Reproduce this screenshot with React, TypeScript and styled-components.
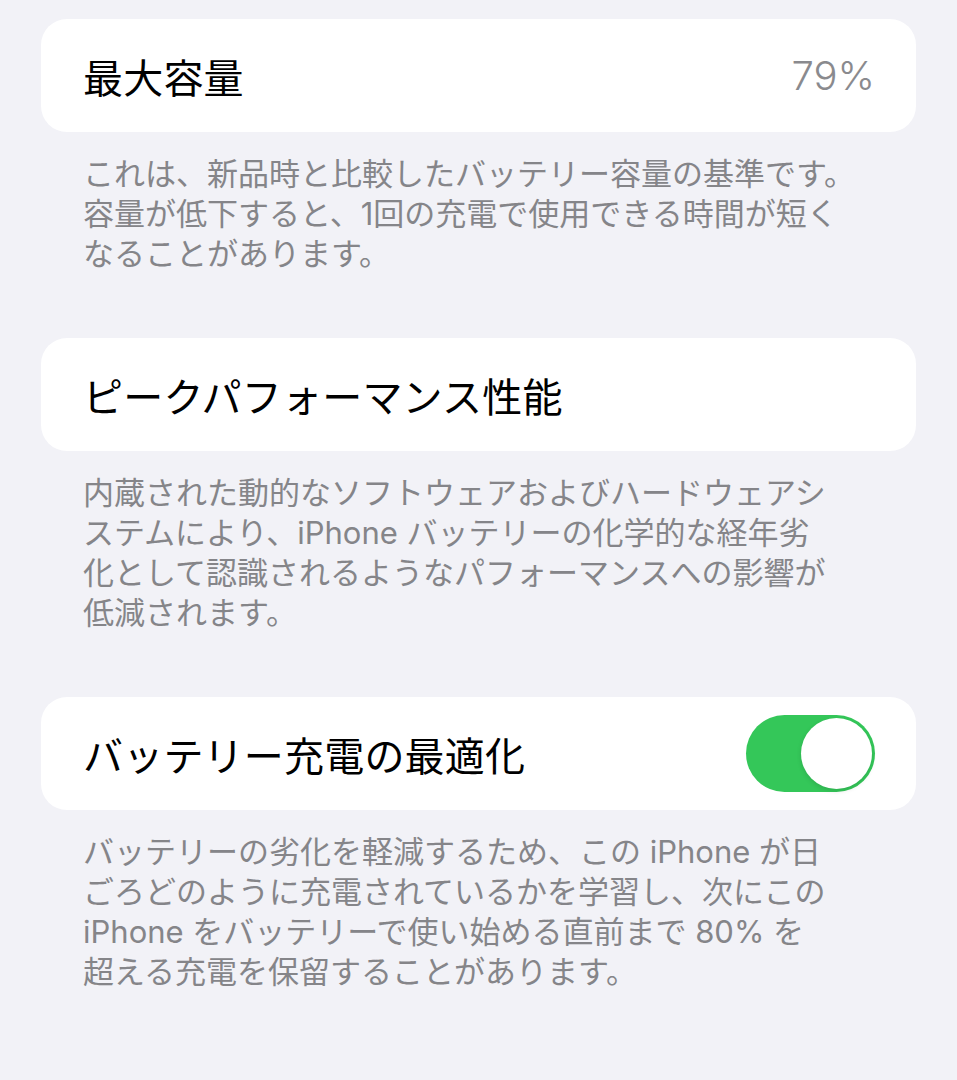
import styled, { createGlobalStyle } from "styled-components";

const GlobalStyle = createGlobalStyle`
  html, body {
    margin: 0;
    padding: 0;
    background: #f2f2f7;
  }
  body {
    font-family: "Inter", "Noto Sans CJK JP", sans-serif;
    -webkit-font-smoothing: antialiased;
  }
`;

const Page = styled.div`
  width: 957px;
  min-height: 1080px;
  box-sizing: border-box;
  padding: 19px 41px 0 41px;
  background: #f2f2f7;
`;

const Card = styled.div`
  display: flex;
  align-items: center;
  justify-content: space-between;
  height: 113px;
  box-sizing: border-box;
  padding: 0 41px 0 42px;
  background: #ffffff;
  border-radius: 26px;
`;

const Title = styled.div`
  font-size: 40px;
  color: #000000;
  letter-spacing: 0.2px;
  white-space: nowrap;
`;

const Value = styled.div`
  font-size: 40px;
  font-weight: 300;
  color: #8a8a8e;
`;

const Footer = styled.div`
  padding: 22px 0 64px 42px;
  font-size: 31px;
  line-height: 40px;
  color: #858589;
`;

const Line = styled.div`
  white-space: pre;
`;

const Track = styled.div<{ on: boolean }>`
  display: flex;
  justify-content: ${(p) => (p.on ? "flex-end" : "flex-start")};
  align-items: center;
  width: 129px;
  height: 77px;
  box-sizing: border-box;
  padding: 3px;
  border-radius: 39px;
  background: ${(p) => (p.on ? "#34c759" : "#e9e9ea")};
`;

const Knob = styled.div`
  width: 71px;
  height: 71px;
  border-radius: 50%;
  background: #ffffff;
  box-shadow: 0 2px 5px rgba(0, 0, 0, 0.12);
`;

type SectionProps = {
  title: string;
  lines: string[];
  value?: string;
  toggle?: boolean;
};

function Section({ title, lines, value, toggle }: SectionProps) {
  return (
    <>
      <Card>
        <Title>{title}</Title>
        {value && <Value>{value}</Value>}
        {toggle !== undefined && (
          <Track on={toggle}>
            <Knob />
          </Track>
        )}
      </Card>
      <Footer>
        {lines.map((l, i) => (
          <Line key={i}>{l}</Line>
        ))}
      </Footer>
    </>
  );
}

export default function App() {
  return (
    <>
      <GlobalStyle />
      <Page>
        <Section
          title="最大容量"
          value="79%"
          lines={[
            "これは、新品時と比較したバッテリー容量の基準です。",
            "容量が低下すると、1回の充電で使用できる時間が短く",
            "なることがあります。",
          ]}
        />
        <Section
          title="ピークパフォーマンス性能"
          lines={[
            "内蔵された動的なソフトウェアおよびハードウェアシ",
            "ステムにより、iPhone バッテリーの化学的な経年劣",
            "化として認識されるようなパフォーマンスへの影響が",
            "低減されます。",
          ]}
        />
        <Section
          title="バッテリー充電の最適化"
          toggle={true}
          lines={[
            "バッテリーの劣化を軽減するため、この iPhone が日",
            "ごろどのように充電されているかを学習し、次にこの",
            "iPhone をバッテリーで使い始める直前まで 80% を",
            "超える充電を保留することがあります。",
          ]}
        />
      </Page>
    </>
  );
}
